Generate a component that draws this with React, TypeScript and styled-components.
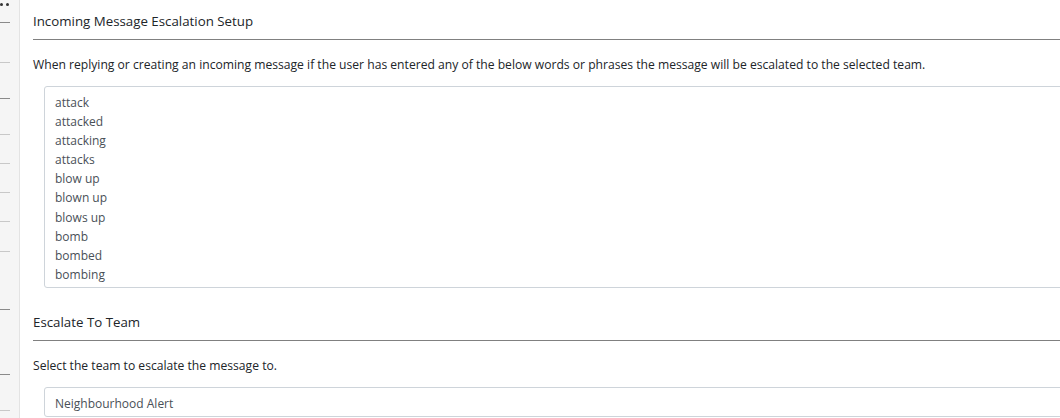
import React from "react";
import styled, { createGlobalStyle } from "styled-components";

const Global = createGlobalStyle`
  html, body { margin: 0; padding: 0; background: #fff; overflow: hidden; }
  body { font-family: "Open Sans", "Noto Sans", sans-serif; color: #212529; }
`;

const Page = styled.div`
  display: flex;
  width: 1100px;
  height: 418px;
  overflow: hidden;
`;

const Sidebar = styled.div`
  width: 19px;
  flex: none;
  background: #f5f5f5;
  border-right: 1px solid #e3e3e3;
  position: relative;
`;

const Dots = styled.div`
  position: absolute;
  left: 0;
  top: 3px;
  display: flex;
  gap: 3px;
  span { width: 3px; height: 3px; border-radius: 50%; background: #333; }
`;

const Tick = styled.div<{ $y: number; $dark?: boolean }>`
  position: absolute;
  left: 0;
  width: 10px;
  height: 1px;
  top: ${(p) => p.$y}px;
  background: ${(p) => (p.$dark ? "#8a8a8a" : "#c8c8c8")};
`;

const Main = styled.div`
  flex: 1;
  padding: 10px 0 0 13px;
  display: flex;
  flex-direction: column;
`;

const Heading = styled.div`
  font-size: 13.3px;
  line-height: 22px;
  color: #212529;
  padding-bottom: 7px;
  border-bottom: 1px solid #808080;
`;

const Desc = styled.div`
  font-size: 12.14px;
  line-height: 20px;
  color: #212529;
  margin: 15px 0 11px;
`;

const Box = styled.div`
  margin-left: 11px;
  border: 1px solid #ced4da;
  border-radius: 3px;
  padding: 6px 10px 3px;
  font-size: 12px;
  line-height: 19.1px;
  color: #495057;
`;

const Section = styled.div`
  margin-top: 23px;
`;

const words = [
  "attack",
  "attacked",
  "attacking",
  "attacks",
  "blow up",
  "blown up",
  "blows up",
  "bomb",
  "bombed",
  "bombing",
];

const ticks: [number, boolean][] = [
  [22, true],
  [62, false],
  [98, true],
  [134, false],
  [163, false],
  [192, false],
  [221, false],
  [251, false],
  [309, true],
  [374, true],
  [410, false],
];

export default function App() {
  return (
    <>
      <Global />
      <Page>
        <Sidebar>
          <Dots>
            <span />
            <span />
          </Dots>
          {ticks.map(([y, d]) => (
            <Tick key={y} $y={y} $dark={d} />
          ))}
        </Sidebar>
        <Main>
          <Heading>Incoming Message Escalation Setup</Heading>
          <Desc>
            When replying or creating an incoming message if the user has entered any of the below words or phrases the
            message will be escalated to the selected team.
          </Desc>
          <Box>
            {words.map((w) => (
              <div key={w}>{w}</div>
            ))}
          </Box>
          <Section>
            <Heading>Escalate To Team</Heading>
            <Desc>Select the team to escalate the message to.</Desc>
            <Box>Neighbourhood Alert</Box>
          </Section>
        </Main>
      </Page>
    </>
  );
}
